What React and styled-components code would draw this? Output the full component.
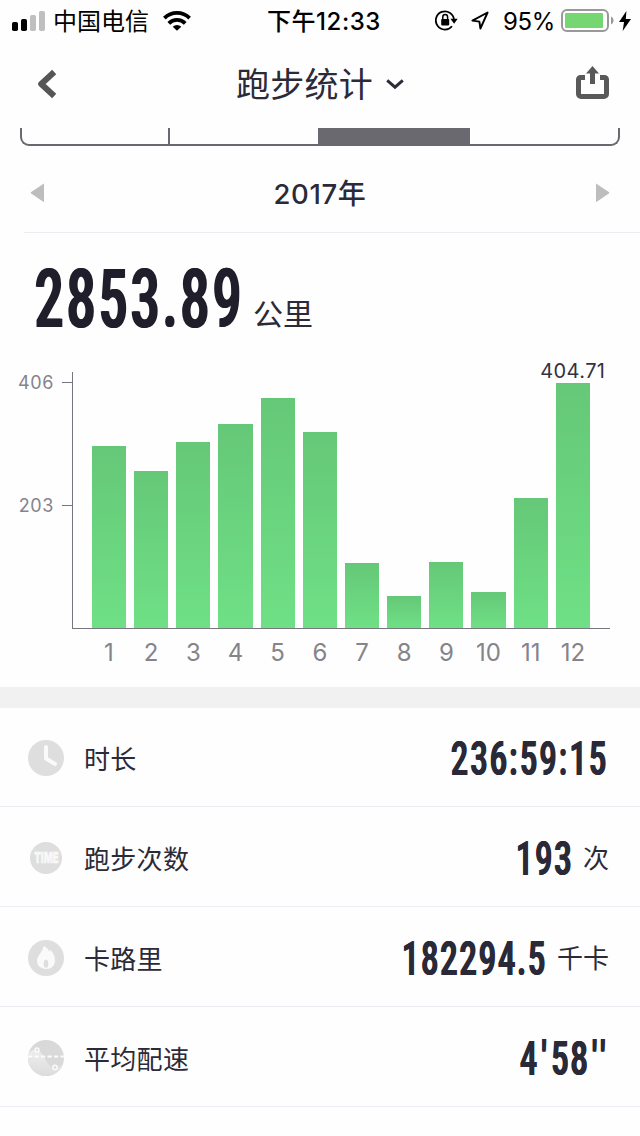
import React from "react";
import styled, { createGlobalStyle } from "styled-components";

const Global = createGlobalStyle`
  * { box-sizing: border-box; }
  body { margin: 0; background: #fefefe; }
`;

const Screen = styled.div`
  width: 640px;
  height: 1136px;
  overflow: hidden;
  display: flex;
  flex-direction: column;
  background: #fefefe;
  color: #2b2a38;
  font-family: Inter, "Noto Sans CJK SC", sans-serif;
  white-space: nowrap;
  svg { display: block; flex: none; }
`;

const StatusBar = styled.header`
  display: grid;
  grid-template-columns: 255px 138px 1fr;
  align-items: center;
  height: 40px;
  padding: 0 8px 0 12px;
  color: #000;
  font-size: 24px;
  line-height: 38px;
`;
const StatusGroup = styled.div`
  display: flex;
  align-items: center;
`;
const Carrier = styled.span`
  margin: 0 14px 0 8px;
  padding-top: 3px;
`;
const Clock = styled.span`
  font-weight: 500;
  font-size: 24px;
  letter-spacing: 0.55px;
  padding-top: 3px;
`;
const Percent = styled.span`
  margin: 0 6px 0 14px;
  font-size: 24px;
  padding-top: 3px;
  letter-spacing: -0.4px;
`;
const StatusRight = styled(StatusGroup)`
  padding-left: 30px;
`;
const LocationBox = styled.span`
  margin-left: 13px;
`;
const BoltBox = styled.span`
  margin-left: 5px;
`;

const NavBar = styled.nav`
  display: flex;
  align-items: center;
  justify-content: space-between;
  height: 88px;
  padding: 0 31px 0 37px;
`;
const Title = styled.h1`
  display: flex;
  align-items: center;
  gap: 13px;
  margin: 0;
  padding-left: 7px;
  font-size: 34px;
  font-weight: 400;
  line-height: 60px;
  letter-spacing: 0.2px;
  span { padding-top: 2px; }
`;
const ShareButton = styled.div`
  margin-top: -3px;
`;

const Segments = styled.div`
  display: flex;
  flex: none;
  height: 18px;
  margin: 0 20px;
  border: 2px solid #69696f;
  border-top: 0;
  border-radius: 0 0 9px 9px;
`;
const Segment = styled.div`
  width: ${(p) => p.$w}px;
  background: ${(p) => (p.$active ? "#69696f" : "transparent")};
  border-right: ${(p) => (p.$divider ? "2px solid #69696f" : "0")};
`;

const YearRow = styled.div`
  display: flex;
  align-items: center;
  justify-content: space-between;
  height: 87px;
  margin-left: 24px;
  padding: 7px 30px 0 6px;
  border-bottom: 1px solid #ededf4;
`;
const Year = styled.span`
  padding-top: 3px;
  font-size: 27.5px;
  font-weight: 550;
  line-height: 40px;
  letter-spacing: 0.6px;
  span { font-weight: 500; font-size: 28px; }
`;

const Total = styled.div`
  display: flex;
  align-items: baseline;
  height: 139px;
  padding: 20px 0 0 35px;
  line-height: 94px;
`;
const TotalUnit = styled.span`
  position: relative;
  top: -2px;
  font-size: 30px;
  font-weight: 400;
`;

const NumberBox = styled.span`
  display: inline-block;
  width: ${(p) => p.$w}px;
`;
const NumberText = styled.span`
  display: inline-block;
  transform: scaleX(${(p) => p.$sx});
  transform-origin: 0 50%;
  font-family: Roboto, sans-serif;
  font-weight: 600;
  font-size: ${(p) => p.$size}px;
  letter-spacing: ${(p) => p.$ls}px;
  color: ${(p) => p.$color || "#2a2937"};
  text-shadow: 0.02em 0 0 currentColor, -0.02em 0 0 currentColor;
`;
function CondensedNumber({ w, sx, size, ls, color, children }) {
  return (
    <NumberBox $w={w}>
      <NumberText $sx={sx} $size={size} $ls={ls} $color={color}>{children}</NumberText>
    </NumberBox>
  );
}
const Prime = styled.span`
  margin: 0 ${(p) => p.$after || 0}px 0 ${(p) => p.$before || 0}px;
  letter-spacing: 7px;
`;

const Chart = styled.section`
  display: grid;
  grid-template-columns: 62px 10px 538px;
  grid-template-rows: 257px 58px;
  height: 315px;
`;
const YLabels = styled.div`
  display: flex;
  flex-direction: column;
  align-items: flex-end;
  padding-right: 8px;
  gap: 101px;
  font-size: 18px;
  line-height: 22px;
  letter-spacing: 0.6px;
  color: #85848b;
`;
const Ticks = styled.div`
  display: flex;
  flex-direction: column;
  gap: 122px;
  padding-top: 10px;
`;
const Tick = styled.div`
  height: 1px;
  background: #77767d;
`;
const Plot = styled.div`
  display: flex;
  align-items: flex-end;
  gap: 7.88px;
  padding-left: 18.82px;
  border-left: 1px solid #77767d;
  border-bottom: 1px solid #77767d;
`;
const Bar = styled.div`
  position: relative;
  flex: none;
  width: 34.3px;
  background: linear-gradient(#65c878, #6fe085);
`;
const BarValue = styled.span`
  position: absolute;
  bottom: 100%;
  left: 50%;
  transform: translateX(-50%);
  font-size: 20px;
  line-height: 23px;
  letter-spacing: 0.4px;
  color: #33323f;
`;
const Months = styled.div`
  grid-column: 3;
  display: flex;
  padding: 9px 0 0 15.9px;
  font-size: 24px;
  line-height: 30px;
  color: #85848b;
`;
const Month = styled.span`
  flex: none;
  width: 42.18px;
  text-align: center;
`;

const Band = styled.div`
  flex: none;
  height: 21px;
  background: #f1f1f1;
`;

const Row = styled.div`
  display: flex;
  flex: none;
  align-items: center;
  height: ${(p) => (p.$first ? 99 : 100)}px;
  padding: ${(p) => (p.$first ? 2 : 3)}px 31px 0 28px;
  border-bottom: 1px solid #ededf4;
`;
const RowLabel = styled.span`
  flex: 1;
  margin: -1px 0 0 20px;
  font-size: 26px;
  letter-spacing: 0.3px;
`;
const RowValue = styled.span`
  display: flex;
  align-items: center;
  line-height: 60px;
  padding-top: 12px;
`;
const RowUnit = styled.span`
  margin: -10px 0 0 12px;
  font-size: 26px;
`;

const months = [182, 157, 186, 204, 230, 196, 65, 32, 66, 36, 130, 245];

const SignalIcon = () => (
  <svg width="33" height="20" viewBox="0 0 33 20">
    <rect x="0" y="11" width="6" height="9" rx="1.8" />
    <rect x="9" y="8" width="6" height="12" rx="1.8" />
    <rect x="18" y="4" width="6" height="16" rx="1.8" fill="#bfbfbf" />
    <rect x="27" y="0" width="6" height="20" rx="1.8" fill="#bfbfbf" />
  </svg>
);
const WifiIcon = () => (
  <svg width="28" height="20" viewBox="0 0 28 20">
    <g fill="none" stroke="#000" strokeWidth="3.8">
      <path d="M1.4 7.1a18 18 0 0 1 25.2 0" />
      <path d="M5.8 12.3a11.6 11.6 0 0 1 16.4 0" />
    </g>
    <path d="M14 19.8l-4.3-4a6.2 6.2 0 0 1 8.6 0z" />
  </svg>
);
const LockIcon = () => (
  <svg width="23" height="21" viewBox="0 0 23 21">
    <path d="M17 16.2A9.1 9.1 0 1 1 19 9.5" fill="none" stroke="#000" strokeWidth="1.8" />
    <path d="M15.4 8.8h7.3l-3.6 5z" />
    <rect x="6.2" y="9" width="8" height="6.4" rx="0.8" />
    <path d="M7.8 9V7a2.4 2.4 0 0 1 4.8 0v2" fill="none" stroke="#000" strokeWidth="1.5" />
  </svg>
);
const LocationIcon = () => (
  <svg width="18" height="19" viewBox="0 0 18 19">
    <path d="M16.6 1.5L1.4 9.6l7 1 1 6.9z" fill="none" stroke="#000" strokeWidth="1.9" strokeLinejoin="round" />
  </svg>
);
const BatteryIcon = () => (
  <svg width="53" height="23" viewBox="0 0 53 23">
    <rect x="1" y="1" width="46" height="21" rx="5" fill="none" stroke="#999" strokeWidth="2" />
    <rect x="4" y="4" width="38" height="15" rx="1" fill="#76d672" />
    <path d="M50 7.5a4.4 4.4 0 0 1 0 8z" fill="#999" />
  </svg>
);
const BoltIcon = () => (
  <svg width="12" height="20" viewBox="0 0 12 20">
    <path d="M7.4 0L0 11h5L3.7 20 12 8H6.8z" />
  </svg>
);
const BackIcon = () => (
  <svg width="20" height="30" viewBox="0 0 20 30">
    <path d="M17.2 3L4.2 15l13 12" fill="none" stroke="#565656" strokeWidth="6" strokeLinejoin="round" />
  </svg>
);
const ChevronIcon = () => (
  <svg width="18" height="12" viewBox="0 0 18 12">
    <path d="M1.2 2.4L9 9.2l7.8-6.800" fill="none" stroke="#2d2c39" strokeWidth="3" />
  </svg>
);
const ShareIcon = () => (
  <svg width="33" height="34" viewBox="0 0 33 34">
    <path d="M9 11.5H4.5a2 2 0 0 0-2 2V28a2.500 2.500 0 0 0 2.500 2.500h23a2.500 2.500 0 0 0 2.500-2.500V13.500a2 2 0 0 0-2-2H24" fill="none" stroke="#595959" strokeWidth="5" />
    <path d="M14 18V7.500H10L16.500 0 23 7.500h-4V18z" fill="#595959" />
  </svg>
);
const Triangle = ({ flip }) => (
  <svg width="14" height="20" viewBox="0 0 14 20">
    <path d={flip ? "M0 .5L13.200 9.300v1L0 19.300z" : "M14 .5L.8 9.300v1L14 19.300z"} fill="#bdbdbf" />
  </svg>
);
const TimeIcon = () => (
  <svg width="36" height="36" viewBox="0 0 36 36">
    <circle cx="18" cy="18" r="18" fill="#dedede" />
    <path d="M18 7v11.500l9 5.500" fill="none" stroke="#fafafa" strokeWidth="4" strokeLinecap="round" strokeLinejoin="round" />
  </svg>
);
const Badge = styled.span`
  display: flex;
  align-items: center;
  justify-content: center;
  flex: none;
  width: 32px;
  height: 32px;
  margin: 0 2px;
  border-radius: 50%;
  background: #dedede;
  color: #f8f8f8;
  font-size: 14.5px;
  font-weight: 900;
  line-height: 24px;
  span { transform: scaleX(0.66); -webkit-text-stroke: 0.4px #f8f8f8; }
`;
const FlameIcon = () => (
  <svg width="36" height="36" viewBox="0 0 36 36">
    <circle cx="18" cy="18" r="18" fill="#dedede" />
    <path d="M15.500 6c3 1.200 5 3.300 6 6 .3-1 .5-1.700.4-2.500 3.200 3 5.100 6.600 5.100 11 0 5-3.800 8.500-9 8.500s-9-3.400-9-8.200c0-3 1.400-5.200 3.400-7.600 1.500-2 2.600-4 3.100-7.200z" fill="#fafafa" />
    <ellipse cx="18" cy="23.800" rx="2.300" ry="4" fill="#dedede" />
  </svg>
);
const PaceIcon = () => (
  <svg width="36" height="36" viewBox="0 0 36 36">
    <defs>
      <clipPath id="disc"><circle cx="18" cy="18" r="18" /></clipPath>
      <linearGradient id="hill" x1="0" y1="0" x2="0" y2="1">
        <stop offset="0" stopColor="#eeeeee" />
        <stop offset="1" stopColor="#dcdcdc" />
      </linearGradient>
    </defs>
    <g clipPath="url(#disc)">
      <rect width="36" height="36" fill="#d9d9d9" />
      <path d="M0 14C4 9 8 8 12 11.500c4 4 8 15 14 17.500 4 0 6-4 10-5v12H0z" fill="url(#hill)" />
      <path d="M0 16.500h36" stroke="#fcfcfc" strokeWidth="2.200" strokeDasharray="4.200 2.300" />
      <g fill="#dedede" stroke="#fafafa" strokeWidth="1.500">
        <circle cx="9" cy="10" r="1.900" />
        <circle cx="27" cy="27.500" r="2.200" />
      </g>
    </g>
  </svg>
);

export default function App() {
  return (
    <Screen>
      <Global />
      <StatusBar>
        <StatusGroup>
          <SignalIcon />
          <Carrier>中国电信</Carrier>
          <WifiIcon />
        </StatusGroup>
        <Clock>下午12:33</Clock>
        <StatusRight>
          <LockIcon />
          <LocationBox><LocationIcon /></LocationBox>
          <Percent>95%</Percent>
          <BatteryIcon />
          <BoltBox><BoltIcon /></BoltBox>
        </StatusRight>
      </StatusBar>
      <NavBar>
        <BackIcon />
        <Title><span>跑步统计</span><ChevronIcon /></Title>
        <ShareButton><ShareIcon /></ShareButton>
      </NavBar>
      <Segments>
        <Segment $w={148} $divider />
        <Segment $w={148} />
        <Segment $w={152} $active />
        <Segment $w={148} />
      </Segments>
      <YearRow>
        <Triangle />
        <Year>2017<span>年</span></Year>
        <Triangle flip />
      </YearRow>
      <Total>
        <CondensedNumber w={218} sx={0.61} size={81} ls={6.2} color="#1f1e2a">2853.89</CondensedNumber>
        <TotalUnit>公里</TotalUnit>
      </Total>
      <Chart>
        <YLabels>
          <span>406</span>
          <span>203</span>
        </YLabels>
        <Ticks>
          <Tick />
          <Tick />
        </Ticks>
        <Plot>
          {months.map((h, i) => (
            <Bar key={i} style={{ height: h }}>
              {i === 11 && <BarValue>404.71</BarValue>}
            </Bar>
          ))}
        </Plot>
        <Months>
          {months.map((_, i) => <Month key={i}>{i + 1}</Month>)}
        </Months>
      </Chart>
      <Band />
      <Row $first>
        <TimeIcon />
        <RowLabel>时长</RowLabel>
        <RowValue>
          <CondensedNumber w={158} sx={0.62} size={48} ls={4}>236:59:15</CondensedNumber>
        </RowValue>
      </Row>
      <Row>
        <Badge><span>TIME</span></Badge>
        <RowLabel>跑步次数</RowLabel>
        <RowValue>
          <CondensedNumber w={55} sx={0.62} size={48} ls={3.6}>193</CondensedNumber>
          <RowUnit>次</RowUnit>
        </RowValue>
      </Row>
      <Row>
        <FlameIcon />
        <RowLabel>卡路里</RowLabel>
        <RowValue>
          <CondensedNumber w={143} sx={0.62} size={48} ls={3.6}>182294.5</CondensedNumber>
          <RowUnit>千卡</RowUnit>
        </RowValue>
      </Row>
      <Row>
        <PaceIcon />
        <RowLabel>平均配速</RowLabel>
        <RowValue>
          <CondensedNumber w={89} sx={0.62} size={48} ls={3.4}>
            4<Prime $before={4} $after={1}>'</Prime>58<Prime $before={4}>''</Prime>
          </CondensedNumber>
        </RowValue>
      </Row>
    </Screen>
  );
}
